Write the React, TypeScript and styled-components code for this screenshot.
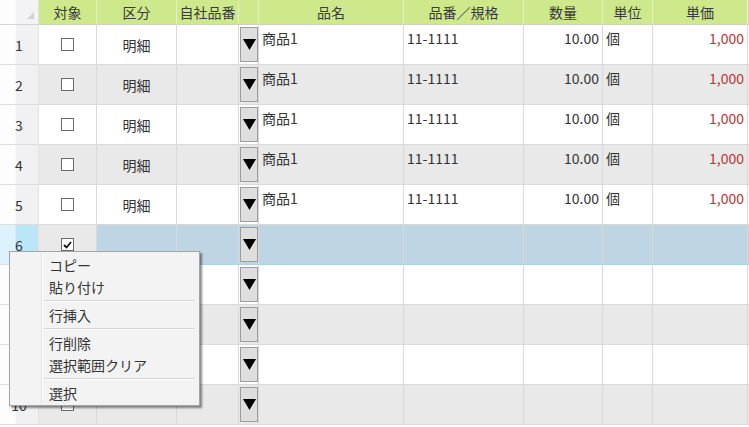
import React from 'react'
import styled, { createGlobalStyle } from 'styled-components'

const GlobalStyle = createGlobalStyle`
  html, body {
    margin: 0;
    padding: 0;
    background: #ffffff;
    overflow: hidden;
  }
  body {
    font-family: "Noto Sans CJK JP", "Noto Sans", sans-serif;
    color: #333333;
  }
`

const COLS = '39px 58px 80px 62px 20px 145px 120px 79px 50px 95px 1fr'

type RowData = {
  no: number
  checked: boolean
  kind: string
  name: string
  code: string
  qty: string
  unit: string
  price: string
}

const rows: RowData[] = [1, 2, 3, 4, 5, 6, 7, 8, 9, 10].map((n) => ({
  no: n,
  checked: n === 6,
  kind: n <= 5 ? '明細' : '',
  name: n <= 5 ? '商品1' : '',
  code: n <= 5 ? '11-1111' : '',
  qty: n <= 5 ? '10.00' : '',
  unit: n <= 5 ? '個' : '',
  price: n <= 5 ? '1,000' : '',
}))

const Page = styled.div`
  position: relative;
  width: 749px;
  height: 427px;
  overflow: hidden;
`

const Grid = styled.div`
  display: grid;
  grid-template-columns: ${COLS};
  grid-auto-rows: 40px;
  grid-template-rows: 25px;
`

const HeadCell = styled.div`
  box-sizing: border-box;
  height: 25px;
  background: #cde98c;
  border-right: 1px solid #e4f2c6;
  border-bottom: 1px solid #c9d3bb;
  font-size: 14px;
  line-height: 24px;
  text-align: center;
  color: #3a3a3a;
  white-space: nowrap;
  overflow: hidden;
`

const Corner = styled.div`
  box-sizing: border-box;
  height: 25px;
  background: linear-gradient(90deg, #fdfdfd 0%, #fdfdfd 40%, #f3f3f5 42%, #f3f3f5 100%);
  border-right: 1px solid #e2e2e2;
  border-bottom: 1px solid #d6d6d6;
  display: flex;
  align-items: flex-end;
  justify-content: flex-end;
  padding: 0 4px 5px 0;
`

const RowHead = styled.div<{ $sel: boolean }>`
  box-sizing: border-box;
  background: ${(p) =>
    p.$sel
      ? 'linear-gradient(90deg, #dcf2fc 0%, #dcf2fc 40%, #bde5f8 42%, #bde5f8 100%)'
      : 'linear-gradient(90deg, #fdfdfd 0%, #fdfdfd 40%, #f1f1f3 42%, #f1f1f3 100%)'};
  border-right: 1px solid #e2e2e2;
  border-bottom: 1px solid #dedede;
  display: flex;
  align-items: center;
  justify-content: center;
  font-size: 14px;
  color: #333;
`

const Cell = styled.div<{ $bg: string; $align?: string; $valign?: string; $color?: string; $line?: string }>`
  box-sizing: border-box;
  background: ${(p) => p.$bg};
  border-right: 1px solid #d9d9d9;
  border-bottom: 1px solid ${(p) => p.$line || '#dadada'};
  display: flex;
  align-items: ${(p) => p.$valign || 'flex-start'};
  justify-content: ${(p) => p.$align || 'flex-start'};
  padding: 4px 3px;
  font-size: 14px;
  line-height: 18px;
  color: ${(p) => p.$color || '#333333'};
  white-space: nowrap;
  overflow: hidden;
`

const DropCell = styled.div<{ $bg: string; $line?: string }>`
  box-sizing: border-box;
  background: ${(p) => p.$bg};
  border-right: 1px solid #d9d9d9;
  border-bottom: 1px solid ${(p) => p.$line || '#dadada'};
  padding: 2px 0 2px 1px;
  display: flex;
`

const DropButton = styled.div`
  box-sizing: border-box;
  width: 18px;
  height: 100%;
  background: #dedede;
  border: 1px solid #9c9c9c;
  display: flex;
  align-items: center;
  justify-content: center;
`

const Check = styled.span`
  box-sizing: border-box;
  width: 13px;
  height: 13px;
  border: 1px solid #6a6a6a;
  background: #ffffff;
  display: flex;
  align-items: center;
  justify-content: center;
`

const Menu = styled.div`
  position: absolute;
  left: 9px;
  top: 251px;
  width: 191px;
  box-sizing: border-box;
  background: #f3f3f3;
  border: 1px solid #a3a3a3;
  box-shadow: 2px 2px 2px rgba(0, 0, 0, 0.45);
  display: flex;
  padding: 2px 2px 1px 2px;
`

const Gutter = styled.div`
  width: 29px;
  border-right: 1px solid #e3e3e3;
  box-shadow: 1px 0 0 #ffffff;
`

const MenuList = styled.div`
  flex: 1;
  display: flex;
  flex-direction: column;
  padding-left: 2px;
`

const MenuItem = styled.div`
  height: 22px;
  line-height: 22px;
  padding-left: 5px;
  font-size: 14px;
  color: #333333;
  white-space: nowrap;
`

const Separator = styled.div`
  height: 1px;
  margin: 2px 2px 3px 0;
  background: #d4d4d4;
  box-shadow: 0 1px 0 #ffffff;
`

const Triangle = () => (
  <svg width="13" height="11" viewBox="0 0 13 11">
    <polygon points="0,0 13,0 6.5,11" fill="#000" />
  </svg>
)

const CheckMark = () => (
  <svg width="9" height="8" viewBox="0 0 9 8">
    <polyline points="1,4 3.5,6.5 8,1" fill="none" stroke="#111" strokeWidth="1.8" />
  </svg>
)

const CornerMark = () => (
  <svg width="7" height="7" viewBox="0 0 7 7">
    <polygon points="7,0 7,7 0,7" fill="#d2d2d2" />
  </svg>
)

const headers = ['対象', '区分', '自社品番', '', '品名', '品番／規格', '数量', '単位', '単価', '']

const App = () => {
  return (
    <Page>
      <GlobalStyle />
      <Grid>
        <Corner>
          <CornerMark />
        </Corner>
        {headers.map((h, i) => (
          <HeadCell key={i}>{h}</HeadCell>
        ))}
        {rows.map((r) => {
          const bg = r.no % 2 === 0 ? '#e9e9e9' : '#ffffff'
          const sel = r.checked
          const dataBg = sel ? '#bed5e3' : bg
          const line = sel ? '#a9d6e6' : undefined
          return (
            <React.Fragment key={r.no}>
              <RowHead $sel={sel}>{r.no}</RowHead>
              <Cell $bg={bg} $align="center" $valign="center" $line={line}>
                <Check>{r.checked && <CheckMark />}</Check>
              </Cell>
              <Cell $bg={dataBg} $align="center" $valign="center" $line={line}>
                {r.kind}
              </Cell>
              <Cell $bg={dataBg} $line={line} />
              <DropCell $bg={dataBg} $line={line}>
                <DropButton>
                  <Triangle />
                </DropButton>
              </DropCell>
              <Cell $bg={dataBg} $line={line}>
                {r.name}
              </Cell>
              <Cell $bg={dataBg} $line={line}>
                {r.code}
              </Cell>
              <Cell $bg={dataBg} $align="flex-end" $line={line}>
                {r.qty}
              </Cell>
              <Cell $bg={dataBg} $line={line}>
                {r.unit}
              </Cell>
              <Cell $bg={dataBg} $align="flex-end" $color="#c8302c" $line={line}>
                {r.price}
              </Cell>
              <Cell $bg={dataBg} $line={line} />
            </React.Fragment>
          )
        })}
      </Grid>
      <Menu>
        <Gutter />
        <MenuList>
          <MenuItem>コピー</MenuItem>
          <MenuItem>貼り付け</MenuItem>
          <Separator />
          <MenuItem>行挿入</MenuItem>
          <Separator />
          <MenuItem>行削除</MenuItem>
          <MenuItem>選択範囲クリア</MenuItem>
          <Separator />
          <MenuItem>選択</MenuItem>
        </MenuList>
      </Menu>
    </Page>
  )
}

export default App
